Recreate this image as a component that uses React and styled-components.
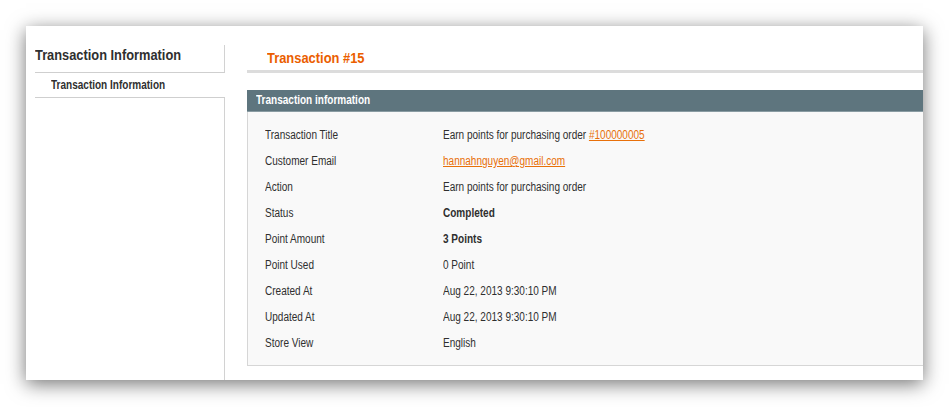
import React from 'react';
import styled, { createGlobalStyle } from 'styled-components';

const GlobalStyle = createGlobalStyle`
  html, body {
    margin: 0;
    padding: 0;
    background: #ffffff;
  }
  body {
    font-family: "Liberation Sans", Arial, sans-serif;
    color: #2f2f2f;
  }
`;

// Arial Narrow is not installed: squeeze Liberation Sans sideways instead
const Narrow = styled.span`
  display: inline-block;
  white-space: nowrap;
  transform: scaleX(${p => p.$scale || 0.835});
  transform-origin: left center;
`;

const Page = styled.div`
  width: 949px;
  height: 407px;
  padding: 26px 0 0 26px;
  box-sizing: border-box;
`;

const Card = styled.div`
  width: 897px;
  height: 354px;
  background: #ffffff;
  box-shadow: 0 4px 18px rgba(0, 0, 0, 0.55);
  display: flex;
  overflow: hidden;
`;

const Sidebar = styled.div`
  width: 190px;
  margin-left: 9px;
  padding-top: 19px;
  display: flex;
  flex-direction: column;
  flex-shrink: 0;
`;

const SideTitle = styled.div`
  height: 27px;
  line-height: 20px;
  font-size: 15px;
  font-weight: bold;
  color: #2f2f2f;
  border-right: 1px solid #d2d2d2;
  border-bottom: 1px solid #cfcfcf;
`;

const SideItem = styled.div`
  height: 24px;
  line-height: 24px;
  padding-left: 16px;
  font-size: 12px;
  font-weight: bold;
  color: #2f2f2f;
`;

const SideRest = styled.div`
  flex: 1;
  border-top: 1px solid #cfcfcf;
  border-right: 1px solid #d2d2d2;
`;

const Main = styled.div`
  margin-left: 22px;
  width: 720px;
  flex-shrink: 0;
  padding-top: 19px;
`;

const TitleBar = styled.div`
  height: 28px;
  box-sizing: border-box;
  padding-left: 20px;
  border-bottom: 3px solid #dcdcdc;
  display: flex;
  align-items: center;
`;

const Title = styled.h3`
  margin: 0;
  font-size: 15px;
  font-weight: bold;
  color: #eb5e00;
`;

const Section = styled.div`
  margin-top: 17px;
`;

const SectionHead = styled.div`
  height: 21px;
  line-height: 21px;
  padding-left: 9px;
  background: #5e757e;
  border-bottom: 1px solid #8a9ca3;
  color: #ffffff;
  font-size: 12px;
  font-weight: bold;
`;

const SectionBody = styled.div`
  background: #f9f9f9;
  border: 1px solid #d6d6d6;
  border-top: none;
  padding: 10px 0 9px 17px;
`;

const Row = styled.div`
  display: flex;
  height: 26px;
  align-items: center;
  font-size: 12px;
`;

const Label = styled.div`
  width: 178px;
  flex-shrink: 0;
`;

const Value = styled.div`
  font-weight: ${p => (p.$strong ? 'bold' : 'normal')};
`;

const Link = styled.a`
  color: #e8700a;
  text-decoration: underline;
`;

const rows = [
  { label: 'Transaction Title', value: <>Earn points for purchasing order <Link href="#">#100000005</Link></> },
  { label: 'Customer Email', value: <Link href="#">hannahnguyen@gmail.com</Link> },
  { label: 'Action', value: 'Earn points for purchasing order' },
  { label: 'Status', value: 'Completed', strong: true },
  { label: 'Point Amount', value: '3 Points', strong: true },
  { label: 'Point Used', value: '0 Point' },
  { label: 'Created At', value: 'Aug 22, 2013 9:30:10 PM' },
  { label: 'Updated At', value: 'Aug 22, 2013 9:30:10 PM' },
  { label: 'Store View', value: 'English' },
];

const App = () => (
  <>
    <GlobalStyle />
    <Page>
      <Card>
        <Sidebar>
          <SideTitle><Narrow $scale={0.855}>Transaction Information</Narrow></SideTitle>
          <SideItem><Narrow>Transaction Information</Narrow></SideItem>
          <SideRest />
        </Sidebar>
        <Main>
          <TitleBar>
            <Title><Narrow $scale={0.86}>Transaction #15</Narrow></Title>
          </TitleBar>
          <Section>
            <SectionHead><Narrow>Transaction information</Narrow></SectionHead>
            <SectionBody>
              {rows.map(r => (
                <Row key={r.label}>
                  <Label><Narrow>{r.label}</Narrow></Label>
                  <Value $strong={r.strong}><Narrow>{r.value}</Narrow></Value>
                </Row>
              ))}
            </SectionBody>
          </Section>
        </Main>
      </Card>
    </Page>
  </>
);

export default App;
